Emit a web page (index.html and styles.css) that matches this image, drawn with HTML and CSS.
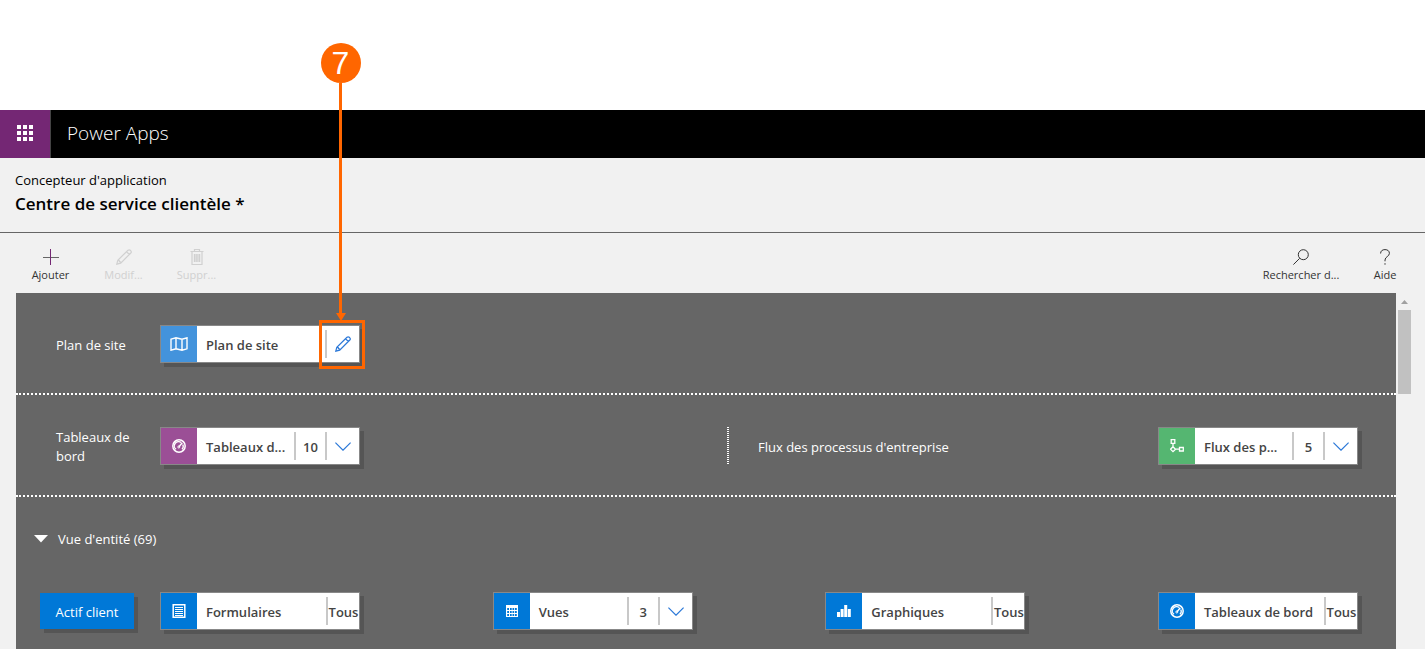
FILE: index.html
```html
<!DOCTYPE html>
<html lang="fr">
<head>
<meta charset="utf-8">
<title>Concepteur d'application</title>
<link rel="stylesheet" href="styles.css">
</head>
<body>
<svg class="defs" aria-hidden="true">
  <symbol id="pencil" viewBox="0 0 16 16"><path stroke-width="1.200" d="M.8 15.200l1-4L12 1.200q1.200-.9 2.300.1l.5.500q1 1.100 0 2.200L4.700 14.200zM10.500 2.700l2.800 2.800M1.900 11.200q1.700-.1 1.500 1.400 1.500-.1 1.400 1.500"/></symbol>
  <symbol id="chevron" viewBox="0 0 16 9"><path stroke-width="1.200" d="M.4.600L8 8.200 15.600.6"/></symbol>
  <symbol id="gauge" viewBox="0 0 14 14"><circle cx="7" cy="7" r="6.200" stroke-width="1.500"/><path d="M4 10.200A4.200 4.200 0 0 1 9.200 3.500M10.800 5.500A4.200 4.200 0 0 1 10 10.200" stroke-width="1.300"/><path d="M7 7.700l3.300-4" stroke-width="1.400"/><circle cx="6.800" cy="8" r="1"/></symbol>
</svg>

<header class="topbar">
  <button class="waffle" aria-label="Lanceur d'applications"><svg width="16" height="16" viewBox="0 0 16 16"><path d="M0 0h4v4H0zM6 0h4v4H6zM12 0h4v4h-4zM0 6h4v4H0zM6 6h4v4H6zM12 6h4v4h-4zM0 12h4v4H0zM6 12h4v4H6zM12 12h4v4h-4z"/></svg></button>
  <span class="brand">Power Apps</span>
</header>

<section class="heading">
  <p class="subtitle">Concepteur d'application</p>
  <h1 class="title">Centre de service clientèle *</h1>
</section>

<nav class="toolbar">
  <button class="tool"><svg class="icon" width="16" height="16" viewBox="0 0 16 16"><path d="M0 8.500h16" stroke="#666"/><path d="M7.500 0v16" stroke="#742774"/></svg><span>Ajouter</span></button>
  <button class="tool" disabled><svg class="icon" width="16" height="16"><use href="#pencil"/></svg><span>Modif...</span></button>
  <button class="tool" disabled><svg class="icon" width="14" height="16" viewBox="0 0 14 16"><path stroke-width="1.200" d="M.5 2.500h13M4.500 2.500v-2h5v2M2 2.500v13h10v-13"/><path stroke-width="1.300" d="M4.500 5v8M6.200 5v8M7.900 5v8M9.600 5v8"/></svg><span>Suppr...</span></button>
  <div class="spacer"></div>
  <button class="tool search"><svg class="icon" width="16" height="16" viewBox="0 0 16 16"><circle cx="10.300" cy="5.700" r="5"/><path d="M6.700 9.300L.4 15.600"/></svg><span>Rechercher d...</span></button>
  <button class="tool help"><svg class="icon" width="10" height="16" viewBox="0 0 10 16"><path d="M.6 4.500C.6 2 2.300.600 5 .600S9.400 2 9.400 4.400C9.400 7.500 5 7.700 5 11v1.300M5 14.200v1.500"/></svg><span>Aide</span></button>
</nav>

<main class="workspace">
  <div class="canvas">
    <section class="row">
      <span class="label">Plan de site</span>
      <div class="card sitemap">
        <span class="tile"><svg width="18" height="14" viewBox="0 0 18 14"><path stroke-width="1.400" d="M1 2.200l5-1.400 6 1.400 5-1.400v11l-5 1.400-6-1.400-5 1.400zM6 .8v11M12 2.200v11"/></svg></span>
        <span class="name">Plan de site</span>
        <button class="action" aria-label="Modifier le plan de site"><svg width="16" height="16"><use href="#pencil"/></svg></button>
      </div>
    </section>
    <section class="row">
      <div class="half first">
        <span class="label">Tableaux de bord</span>
        <div class="card dashboard">
          <span class="tile"><svg width="14" height="14"><use href="#gauge"/></svg></span>
          <span class="name">Tableaux d...</span>
          <span class="count">10</span>
          <button class="action" aria-label="Développer les tableaux de bord"><svg width="16" height="9"><use href="#chevron"/></svg></button>
        </div>
      </div>
      <div class="half second">
        <span class="wide-label">Flux des processus d'entreprise</span>
        <div class="card process">
          <span class="tile"><svg width="14" height="14" viewBox="0 0 14 14"><path stroke-width="1.300" d="M1.200.700h3.600v3.600H1.200zM3 4.300v3.400M3 7.700l2.500 2.500L3 12.700.5 10.200zM5.500 10.200h4M9.500 8.500h3.800v3.500H9.500z"/></svg></span>
          <span class="name">Flux des p...</span>
          <span class="count">5</span>
          <button class="action" aria-label="Développer les flux"><svg width="16" height="9"><use href="#chevron"/></svg></button>
        </div>
      </div>
    </section>
    <section class="entities">
      <button class="toggle"><svg width="14" height="8" viewBox="0 0 14 8"><path d="M0 0h14L7 7.500z"/></svg>Vue d'entité (69)</button>
      <div class="entity">
        <button class="entity-name">Actif client</button>
        <div class="cards">
          <div class="card">
            <span class="tile"><svg width="14" height="14" viewBox="0 0 14 14"><path stroke-width="1.500" d="M1.200.800h11.600v12.400H1.200z"/><path d="M3 3.500h8M3 5.500h8M3 7.500h8M3 9.500h8M3 11.500h8"/></svg></span>
            <span class="name">Formulaires</span>
            <button class="all">Tous</button>
          </div>
          <div class="card">
            <span class="tile"><svg width="12" height="12" viewBox="0 0 12 12"><path class="solid" fill-rule="evenodd" d="M0 0h12v12H0zM1.200 3h1.800v2H1.200zM4 3h1.700v2H4zM6.500 3h1.700v2H6.500zM9 3h1.800v2H9zM1.200 6h1.800v2H1.200zM4 6h1.700v2H4zM6.500 6h1.700v2H6.500zM9 6h1.800v2H9zM1.200 9h1.800v2H1.200zM4 9h1.700v2H4zM6.500 9h1.700v2H6.500zM9 9h1.800v2H9z"/></svg></span>
            <span class="name">Vues</span>
            <span class="count">3</span>
            <button class="action" aria-label="Développer les vues"><svg width="16" height="9"><use href="#chevron"/></svg></button>
          </div>
          <div class="card">
            <span class="tile"><svg width="14" height="12" viewBox="0 0 14 12"><path class="solid" d="M0 7h3v5H0zM3.600 4h3v8h-3zM7.200 0h3v12h-3zM10.800 4h3v8h-3z"/></svg></span>
            <span class="name">Graphiques</span>
            <button class="all">Tous</button>
          </div>
          <div class="card">
            <span class="tile"><svg width="14" height="14"><use href="#gauge"/></svg></span>
            <span class="name">Tableaux de bord</span>
            <button class="all">Tous</button>
          </div>
        </div>
      </div>
    </section>
  </div>
  <div class="scrollbar" aria-hidden="true">
    <svg width="7" height="4" viewBox="0 0 7 4"><path d="M3.500 0L7 4H0z"/></svg>
    <div class="thumb"></div>
  </div>
</main>

<div class="callout">
  <span class="badge">7</span>
  <span class="stem"></span>
  <span class="arrow"></span>
  <span class="frame"></span>
</div>
</body>
</html>
```

FILE: styles.css
```css
* { box-sizing: border-box; }

body {
  margin: 0;
  padding-top: 110px;
  min-height: 100vh;
  display: flex;
  flex-direction: column;
  background: #fff;
  color: #000;
  font: 13px/19px "Open Sans", "Noto Sans", sans-serif;
}

button {
  margin: 0;
  padding: 0;
  border: 0;
  background: none;
  color: inherit;
  font: inherit;
}

svg { display: block; flex: none; }
.defs { position: absolute; width: 0; height: 0; }

.topbar {
  display: flex;
  align-items: center;
  height: 48px;
  background: #000;
  color: #fff;
}
.waffle {
  display: flex;
  align-items: center;
  justify-content: center;
  width: 51px;
  height: 48px;
  padding-bottom: 2px;
  background: #742774;
  border-right: 1px solid #444;
  fill: #fff;
}
.brand {
  padding: 0 0 2px 16px;
  font-size: 19px;
  font-weight: 300;
  line-height: 26px;
}

.heading {
  padding: 12px 15px 14px;
  background: #f1f1f1;
  border-bottom: 1px solid #666;
}
.subtitle { margin: 0; line-height: 20px; }
.title {
  margin: 0;
  font-size: 17px;
  font-weight: 600;
  line-height: 28px;
}

.toolbar {
  display: flex;
  height: 60px;
  padding: 16px 4px 0 14px;
  background: #f1f1f1;
}
.spacer { flex: 1; }
.tool {
  display: flex;
  flex-direction: column;
  align-items: center;
  gap: 2px;
  width: 73px;
  color: #333;
  font-size: 11px;
  line-height: 16px;
  white-space: nowrap;
}
.tool:disabled { color: #d0d0d0; }
.icon { fill: none; stroke: currentColor; }
.tool.search { width: 76px; }
.tool.help { width: 72px; margin-left: 10px; }

.workspace {
  flex: 1;
  display: flex;
  padding: 0 12px 0 16px;
  background: #f1f1f1;
}
.canvas {
  flex: 1;
  background: #666;
  color: #fff;
}
.row {
  display: flex;
  align-items: center;
  min-height: 102px;
  padding: 2px 38px 0 40px;
  border-bottom: 2px dotted #fff;
}
.label {
  width: 80px;
  margin-right: 24px;
  padding-top: 2px;
}
.half {
  flex: 1;
  display: flex;
  align-items: center;
}
.half.first { padding-right: 40px; }
.half.second {
  justify-content: space-between;
  background: repeating-linear-gradient(#fff 0 1px, transparent 1px 2px) left / 2px 100% no-repeat;
}
.wide-label { padding: 2px 0 0 31px; }

.card {
  display: flex;
  align-items: center;
  width: 200px;
  height: 38px;
  border: 1px solid #888;
  background: #fff;
  box-shadow: 4px 4px 0 #555;
  color: #444;
  font-weight: 600;
}
.tile {
  display: flex;
  align-items: center;
  justify-content: center;
  width: 36px;
  height: 36px;
  background: #0078d7;
  fill: none;
  stroke: #fff;
}
.solid { fill: #fff; stroke: none; }
.sitemap .tile { background: #4393dc; }
.dashboard .tile { background: #9b4f96; }
.process .tile { background: #55b671; }
.name {
  flex: 1;
  padding: 2px 0 0 9px;
  white-space: nowrap;
}
.count, .action, .all {
  display: flex;
  align-items: center;
  justify-content: center;
  height: 28px;
  border-left: 2px solid #c8c8c8;
}
.count, .all { padding-top: 2px; }
.count { width: 31px; }
.action {
  width: 34px;
  fill: none;
  stroke: #2b78d8;
}
.all { width: 33px; }

.entities { padding: 32px 38px 20px 18px; }
.toggle {
  display: flex;
  align-items: center;
  gap: 10px;
  height: 20px;
  fill: #fff;
}
.entity {
  display: flex;
  align-items: center;
  gap: 26px;
  margin: 43px 0 0 6px;
}
.entity-name {
  width: 94px;
  height: 36px;
  padding-top: 2px;
  background: #0078d7;
  box-shadow: 4px 4px 0 #555;
}
.cards {
  flex: 1;
  display: flex;
  justify-content: space-between;
}

.scrollbar {
  width: 17px;
  padding: 7px 2px 0;
  fill: #a0a0a0;
}
.scrollbar svg { margin: 0 auto 6px; }
.thumb { height: 84px; background: #c1c1c1; }

.callout {
  position: absolute;
  top: 43px;
  left: 319px;
  width: 46px;
  display: flex;
  flex-direction: column;
  align-items: center;
  pointer-events: none;
}
.badge {
  width: 40px;
  height: 40px;
  margin-right: 3px;
  border-radius: 50%;
  background: #f60;
  color: #fff;
  font: 32px/40px "Liberation Sans", Arial, sans-serif;
  text-align: center;
}
.stem {
  width: 3px;
  height: 230px;
  margin-right: 3px;
  background: #f60;
}
.arrow {
  margin-right: 3px;
  border: 5px solid transparent;
  border-top: 8px solid #f60;
  border-bottom: 0;
}
.frame {
  width: 46px;
  height: 49px;
  margin-top: -1px;
  border: 3px solid #f60;
}
```
